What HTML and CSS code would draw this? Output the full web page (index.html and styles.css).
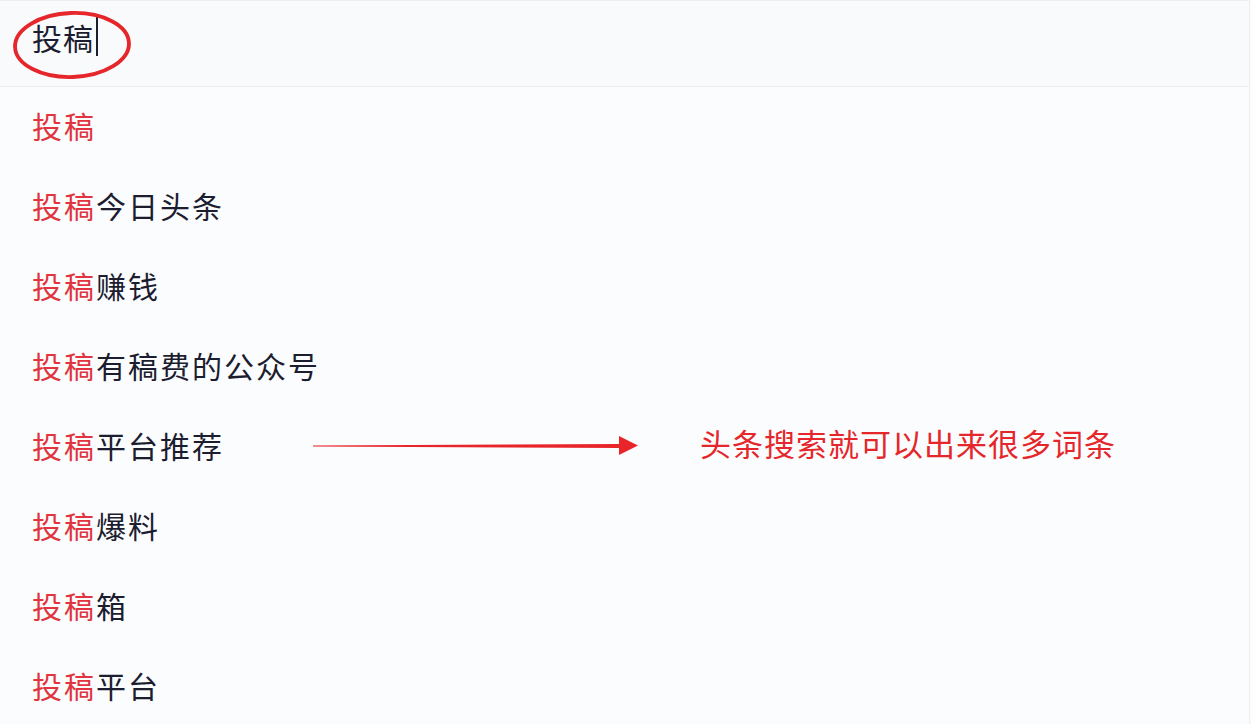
FILE: index.html
```html
<!DOCTYPE html>
<html lang="zh-CN">
<head>
<meta charset="utf-8">
<title>投稿</title>
<link rel="stylesheet" href="styles.css">
</head>
<body>
<div class="panel">
  <div class="search">
    <span class="query">投稿</span><span class="caret"></span>
    <svg class="circle" width="124" height="72" viewBox="0 0 124 72">
      <ellipse cx="61" cy="36" rx="57" ry="32" fill="none" stroke="#e5262a" stroke-width="3.8" transform="rotate(-2 61 36)"/>
    </svg>
  </div>
  <ul class="list">
    <li class="item"><span class="hl">投稿</span></li>
    <li class="item"><span class="hl">投稿</span>今日头条</li>
    <li class="item"><span class="hl">投稿</span>赚钱</li>
    <li class="item"><span class="hl">投稿</span>有稿费的公众号</li>
    <li class="item note-row">
      <span class="label"><span class="hl">投稿</span>平台推荐</span>
      <svg class="arrow" width="326" height="22" viewBox="0 0 326 22">
        <polygon points="0,10.5 307,9 307,13 0,11.5" fill="#e8262a"/>
        <polygon points="306,1 325,10.5 306,20" fill="#e8262a"/>
      </svg>
      <span class="note">头条搜索就可以出来很多词条</span>
    </li>
    <li class="item"><span class="hl">投稿</span>爆料</li>
    <li class="item"><span class="hl">投稿</span>箱</li>
    <li class="item"><span class="hl">投稿</span>平台</li>
  </ul>
</div>
</body>
</html>
```
FILE: styles.css
```css
html, body {
  margin: 0;
  padding: 0;
  background: #fbfcfe;
}
body {
  width: 1252px;
  height: 724px;
  overflow: hidden;
  font-family: "Noto Sans CJK SC", "Noto Sans", sans-serif;
}
.panel {
  width: 1250px;
  height: 724px;
  border-top: 1px solid #eceef2;
  border-right: 1px solid #eceef2;
  box-sizing: border-box;
}
.search {
  position: relative;
  height: 86px;
  display: flex;
  align-items: center;
  padding-left: 32px;
  padding-bottom: 14px;
  box-sizing: border-box;
  background: #f9fafc;
  border-bottom: 1px solid #e9ecf1;
}
.query {
  font-size: 30px;
  letter-spacing: 1px;
  color: #1d1d30;
  line-height: 1;
}
.caret {
  width: 2px;
  height: 39px;
  background: #1d1d30;
  margin-left: 2px;
}
.circle {
  position: absolute;
  left: 11px;
  top: 8px;
}
.list {
  list-style: none;
  margin: 0;
  padding: 0;
}
.item {
  height: 80px;
  display: flex;
  align-items: center;
  padding-left: 32px;
  padding-bottom: 4px;
  box-sizing: border-box;
  font-size: 30px;
  letter-spacing: 2px;
  color: #1d1d30;
  line-height: 1;
}
.hl {
  color: #e0343f;
}
.note-row {
  display: grid;
  grid-template-columns: 281px 326px auto;
  column-gap: 0;
  align-items: center;
}
.arrow {
  display: block;
  margin-top: 2px;
}
.note {
  font-size: 31px;
  letter-spacing: 1px;
  color: #e5262a;
  margin-top: -6px;
  margin-left: 61px;
}
```
